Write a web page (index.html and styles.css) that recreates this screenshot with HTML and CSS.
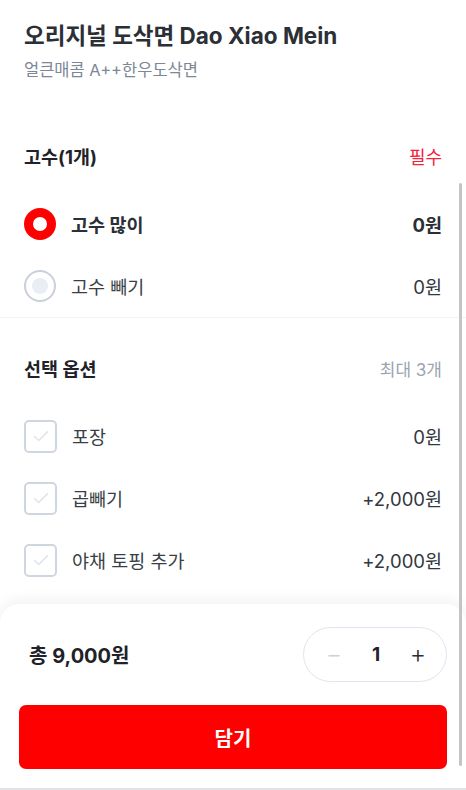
FILE: index.html
```html
<!DOCTYPE html>
<html lang="ko">
<head>
<meta charset="utf-8">
<link rel="stylesheet" href="styles.css">
</head>
<body>
<div class="app">
  <div class="content">
    <header class="head">
      <h1 class="title">오리지널 도삭면 Dao Xiao Mein</h1>
      <p class="sub">얼큰매콤 A++한우도삭면</p>
    </header>

    <section class="group first">
      <div class="group-head">
        <span class="group-title">고수(1개)</span>
        <span class="tag req">필수</span>
      </div>
      <div class="row">
        <span class="radio on"></span>
        <span class="label strong">고수 많이</span>
        <span class="price strong">0원</span>
      </div>
      <div class="row">
        <span class="radio"></span>
        <span class="label">고수 빼기</span>
        <span class="price">0원</span>
      </div>
    </section>

    <section class="group second">
      <div class="group-head">
        <span class="group-title">선택 옵션</span>
        <span class="tag">최대 3개</span>
      </div>
      <div class="row">
        <span class="check"><svg viewBox="0 0 24 24" width="22" height="22"><path d="M5 12.5l4.5 4.5L19 7.5" fill="none" stroke="#dfe4ea" stroke-width="1.6" stroke-linecap="round" stroke-linejoin="round"/></svg></span>
        <span class="label">포장</span>
        <span class="price">0원</span>
      </div>
      <div class="row">
        <span class="check"><svg viewBox="0 0 24 24" width="22" height="22"><path d="M5 12.5l4.5 4.5L19 7.5" fill="none" stroke="#dfe4ea" stroke-width="1.6" stroke-linecap="round" stroke-linejoin="round"/></svg></span>
        <span class="label">곱빼기</span>
        <span class="price">+2,000원</span>
      </div>
      <div class="row">
        <span class="check"><svg viewBox="0 0 24 24" width="22" height="22"><path d="M5 12.5l4.5 4.5L19 7.5" fill="none" stroke="#dfe4ea" stroke-width="1.6" stroke-linecap="round" stroke-linejoin="round"/></svg></span>
        <span class="label">야채 토핑 추가</span>
        <span class="price">+2,000원</span>
      </div>
    </section>
  </div>

  <footer class="panel">
    <div class="total-row">
      <span class="total">총 9,000원</span>
      <div class="stepper">
        <span class="step minus">−</span>
        <span class="qty">1</span>
        <span class="step plus">+</span>
      </div>
    </div>
    <button class="cta">담기</button>
  </footer>

  <div class="scrollbar"></div>
</div>
</body>
</html>
```

FILE: styles.css
```css
* { box-sizing: border-box; }
html, body { margin: 0; padding: 0; }
body {
  font-family: Inter, "Noto Sans CJK KR", sans-serif;
  color: #2b2f36;
  background: #fff;
}
.app {
  position: relative;
  height: 790px;
  display: flex;
  flex-direction: column;
  overflow: hidden;
  border-bottom: 2px solid #e2e2e4;
}
.content {
  flex: 1;
  overflow: hidden;
}
.head {
  padding: 22px 24px 0;
}
.title {
  margin: 0;
  font-size: 22.5px;
  line-height: 28px;
  font-weight: 700;
  color: #2b2f36;
}
.sub {
  margin: 10px 0 0;
  font-size: 16.5px;
  line-height: 21px;
  color: #7d8796;
}
.group {
  padding: 0 24px;
}
.group.first {
  padding-top: 63px;
  border-bottom: 1px solid #f4f4f6;
}
.group.second {
  padding-top: 38px;
}
.group-head {
  display: flex;
  justify-content: space-between;
  align-items: center;
  height: 24px;
  margin-bottom: 25px;
}
.group-title {
  font-size: 18.5px;
  font-weight: 700;
  color: #1f2228;
}
.tag {
  font-size: 17px;
  color: #9ba4b1;
}
.tag.req { color: #f5223c; font-size: 18px; }
.row {
  display: flex;
  align-items: center;
  height: 62px;
  font-size: 18.5px;
}
.label {
  flex: 1;
  margin-left: 15px;
  color: #3a3f47;
}
.price { color: #33373e; }
.strong { font-weight: 700; color: #2b2f36; }
.radio {
  width: 32px;
  height: 32px;
  border-radius: 50%;
  border: 2px solid #c9d0da;
  display: flex;
  align-items: center;
  justify-content: center;
  flex: none;
}
.radio::after {
  content: "";
  width: 16px;
  height: 16px;
  border-radius: 50%;
  background: #e9edf4;
}
.radio.on {
  border: none;
  background: #ff0000;
}
.radio.on::after {
  width: 14px;
  height: 14px;
  background: #fff;
}
.check {
  width: 33px;
  height: 33px;
  border: 2px solid #d0d6df;
  border-radius: 5px;
  display: flex;
  align-items: center;
  justify-content: center;
  flex: none;
}
.panel {
  flex: none;
  background: #fff;
  border-radius: 20px 20px 0 0;
  box-shadow: 0 -4px 14px rgba(20, 30, 60, 0.06);
  padding: 23px 19px 19px;
  position: relative;
}
.total-row {
  display: flex;
  align-items: center;
  justify-content: space-between;
  padding-left: 10px;
}
.total {
  font-size: 20px;
  font-weight: 700;
  color: #1f2228;
}
.stepper {
  width: 144px;
  height: 55px;
  border: 1px solid #dfe5f0;
  border-radius: 28px;
  display: flex;
  align-items: center;
  justify-content: space-between;
  padding: 0 18px 0 20px;
}
.step {
  font-size: 25px;
  font-weight: 300;
  width: 20px;
  text-align: center;
  line-height: 1;
}
.minus { color: #ccd2dc; }
.plus { color: #2b2f36; }
.qty {
  font-size: 19px;
  font-weight: 700;
  color: #1f2228;
}
.cta {
  display: block;
  width: 100%;
  height: 64px;
  margin-top: 23px;
  border: none;
  border-radius: 7px;
  background: #ff0000;
  color: #fff;
  font-family: inherit;
  font-size: 20px;
  font-weight: 700;
}
.scrollbar {
  position: absolute;
  right: 4px;
  top: 183px;
  width: 3px;
  height: 583px;
  border-radius: 2px;
  background: #c4c4c6;
}
```
